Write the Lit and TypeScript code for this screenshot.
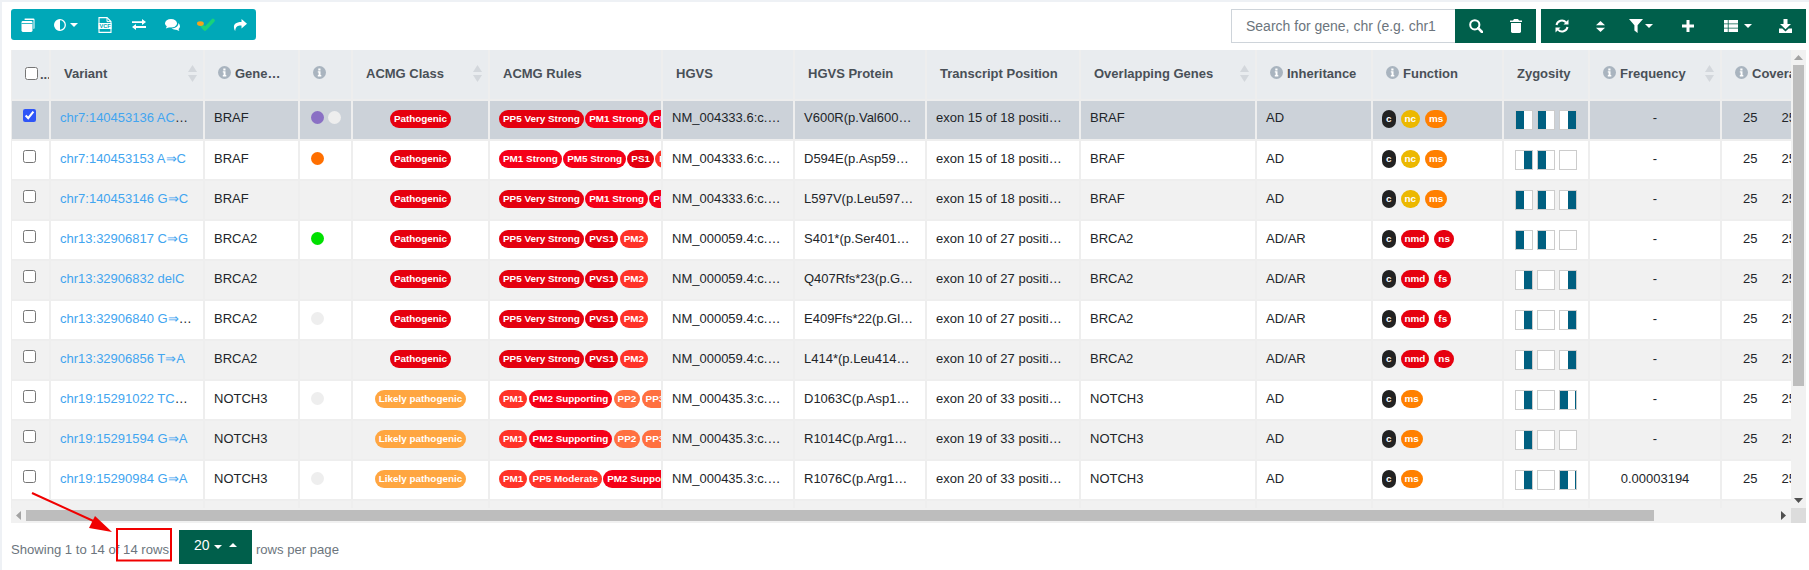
import { LitElement, html, css } from "lit";
import { customElement } from "lit/decorators.js";

const I = {
  copy: html`<svg width="14" height="14" viewBox="0 0 14 14" fill="#fff"><path d="M4 0.5h8.500a1 1 0 0 1 1 1V10a1 1 0 0 1-1 1V2H4a0.800 0.800 0 0 1 0-1.500z"/><rect x="0.500" y="3" width="11" height="11" rx="1.400"/><rect x="0.500" y="5" width="11" height="0.800" fill="#00a8b8"/></svg>`,
  adjust: html`<svg width="12" height="12" viewBox="0 0 12 12"><circle cx="6" cy="6" r="5.300" fill="none" stroke="#fff" stroke-width="1.300"/><path d="M6 0.500a5.500 5.500 0 0 0 0 11z" fill="#fff"/></svg>`,
  caret: html`<svg class="caret" width="8" height="4" viewBox="0 0 8 4" fill="#fff"><path d="M0 0h8L4 4z"/></svg>`,
  vcf: html`<svg width="14" height="16" viewBox="0 0 14 16"><path d="M1 .6h8l4 4V15.400H1z" fill="none" stroke="#fff" stroke-width="1.100"/><path d="M9 .6v4h4" fill="none" stroke="#fff"/><rect x="0.500" y="6" width="13" height="6" fill="#fff"/><text x="7" y="11" text-anchor="middle" font-family="Liberation Sans" font-weight="700" font-size="5.600" fill="#00a8b8">VCF</text></svg>`,
  exchange: html`<svg width="14" height="11" viewBox="0 0 14 11" fill="#fff"><path d="M0 2.200h10V0l4 3-4 3V4H0z"/><path d="M14 7H4V5L0 8l4 3V9h10z"/></svg>`,
  comments: html`<svg width="15" height="12" viewBox="0 0 15 12" fill="#fff"><ellipse cx="6" cy="4.300" rx="6" ry="4.300"/><path d="M2 7l-1.200 2.600L5 8z"/><path d="M13.400 4a4.600 4.600 0 0 1 1.600 3.200c0 1.200-.6 2.200-1.500 2.800l.9 2-3.200-1.300c-1.900.2-3.600-.3-4.600-1.400 3.400.1 7-1.700 6.800-5.300z"/></svg>`,
  check: html`<svg width="18" height="13" viewBox="0 0 18 13"><path d="M5.500 8.200L8 11l8-8.500" fill="none" stroke="#18d27a" stroke-width="3.600" stroke-linecap="round" stroke-linejoin="round"/><ellipse cx="3.400" cy="5.600" rx="3.400" ry="2.400" fill="#f2a31d"/></svg>`,
  share: html`<svg width="14" height="12" viewBox="0 0 14 12" fill="#fff"><path d="M8.500 0L14 4.700 8.500 9.400V6.600C5 6.500 2.600 7.300 2.200 12 .2 8.700-.5 3 8.500 3z"/></svg>`,
  search: html`<svg width="14" height="14" viewBox="0 0 14 14" fill="none" stroke="#fff"><circle cx="5.800" cy="5.800" r="4.600" stroke-width="2"/><path d="M9.200 9.200L13 13" stroke-width="2.600" stroke-linecap="round"/></svg>`,
  trash: html`<svg width="12" height="14" viewBox="0 0 12 14" fill="#fff"><path d="M4 0h4l1 1.500h3V3H0V1.500h3z"/><path d="M1 4h10v8.600A1.400 1.400 0 0 1 9.600 14H2.400A1.400 1.400 0 0 1 1 12.600z"/></svg>`,
  refresh: html`<svg width="14" height="14" viewBox="0 0 14 14" fill="none" stroke="#fff" stroke-width="2"><path d="M1.500 6A5.500 5.500 0 0 1 11 3.400"/><path d="M12.500 8A5.500 5.500 0 0 1 3 10.600"/><path d="M13.500 .5v5h-5z" fill="#fff" stroke="none"/><path d="M.5 13.500v-5h5z" fill="#fff" stroke="none"/></svg>`,
  sort: html`<svg width="9" height="11" viewBox="0 0 9 11" fill="#fff"><path d="M4.500 0L9 4.300H0z"/><path d="M4.500 11L9 6.700H0z"/></svg>`,
  filter: html`<svg width="14" height="14" viewBox="0 0 14 14" fill="#fff"><path d="M0 0h14L8.600 6.200V14L5.400 11.400V6.200z"/></svg>`,
  plus: html`<svg width="12" height="12" viewBox="0 0 12 12" fill="#fff"><path d="M4.500 0h3v4.500H12v3H7.500V12h-3V7.500H0v-3h4.500z"/></svg>`,
  table: html`<svg width="14" height="12" viewBox="0 0 14 12" fill="#fff"><path d="M0 0h3.800v3.400H0zM4.600 0H14v3.400H4.600zM0 4.300h3.800v3.400H0zM4.600 4.300H14v3.400H4.600zM0 8.600h3.800V12H0zM4.600 8.600H14V12H4.600z"/></svg>`,
  download: html`<svg width="13" height="14" viewBox="0 0 13 14" fill="#fff"><path d="M4.500 0h4v5H12L6.500 10.300 1 5h3.500z"/><path d="M0 9.500h3.300l3.200 3 3.200-3H13V14H0z"/></svg>`,
  info: html`<svg class="info" width="13" height="13" viewBox="0 0 13 13"><circle cx="6.500" cy="6.500" r="6.500" fill="#a9b4bf"/><path d="M5.300 2.500h2.200v1.900H5.300zM4.800 5.300h2.700v3.800h.8v1.300H4.800V9.100h.8V6.600h-.8z" fill="#fff"/></svg>`,
  sortH: html`<svg class="sorth" width="9" height="17" viewBox="0 0 9 17" fill="#d3d7dc"><path d="M4.500 0L9 7H0z"/><path d="M4.500 17L9 10H0z"/></svg>`,
  aUp: html`<svg width="9" height="5" viewBox="0 0 9 5" fill="#a3a3a3"><path d="M4.500 0L9 5H0z"/></svg>`,
  aDown: html`<svg width="9" height="5" viewBox="0 0 9 5" fill="#505050"><path d="M0 0h9L4.500 5z"/></svg>`,
  aLeft: html`<svg width="5" height="9" viewBox="0 0 5 9" fill="#a3a3a3"><path d="M5 0v9L0 4.500z"/></svg>`,
  aRight: html`<svg width="5" height="9" viewBox="0 0 5 9" fill="#505050"><path d="M0 0l5 4.500L0 9z"/></svg>`,
};

type H = { t: string; info?: boolean; sort?: boolean };
const heads: H[] = [
  { t: "Variant", sort: true },
  { t: "Gene…", info: true },
  { t: "", info: true },
  { t: "ACMG Class", sort: true },
  { t: "ACMG Rules" },
  { t: "HGVS" },
  { t: "HGVS Protein" },
  { t: "Transcript Position" },
  { t: "Overlapping Genes", sort: true },
  { t: "Inheritance", info: true },
  { t: "Function", info: true },
  { t: "Zygosity" },
  { t: "Frequency", info: true, sort: true },
  { t: "Coverage", info: true },
];

const rulesA = ["PP5 Very Strong", "PM1 Strong", "PM5 Strong", "PM2"];
const rulesB = ["PM1 Strong", "PM5 Strong", "PS1", "PM2"];
const rulesC = ["PP5 Very Strong", "PVS1", "PM2"];
const rulesD = ["PM1", "PM2 Supporting", "PP2", "PP3"];
const rulesE = ["PM1", "PP5 Moderate", "PM2 Supporting"];

const ruleClass: Record<string, string> = {
  "PP5 Very Strong": "vs",
  "PVS1": "vs",
  "PS1": "vs",
  "PM1 Strong": "st",
  "PM5 Strong": "st",
  "PM2 Supporting": "st",
  "PM2": "mo",
  "PM1": "mo",
  "PP5 Moderate": "mo",
  "PP2": "su",
  "PP3": "su",
};

const fnClass: Record<string, string> = { c: "fc", nc: "fnc", ms: "fms", nmd: "fr", ns: "fr", fs: "fr" };

type R = {
  v: string; g: string; dots: string[]; cls: string; rules: string[]; nm: string; p: string; e: string;
  inh: string; fn: string[]; z: string[]; f: string;
};

const P = "Pathogenic";
const L = "Likely pathogenic";
const rows: R[] = [
  { v: "chr7:140453136 AC⇒TT", g: "BRAF", dots: ["purple", "pale"], cls: P, rules: rulesA, nm: "NM_004333.6:c.1798_1799delinsAA", p: "V600R(p.Val600Arg)", e: "exon 15 of 18 position 1799", inh: "AD", fn: ["c", "nc", "ms"], z: ["l", "l", "r"], f: "-" },
  { v: "chr7:140453153 A⇒C", g: "BRAF", dots: ["orange"], cls: P, rules: rulesB, nm: "NM_004333.6:c.1782T>G", p: "D594E(p.Asp594Glu)", e: "exon 15 of 18 position 1782", inh: "AD", fn: ["c", "nc", "ms"], z: ["r", "l", "n"], f: "-" },
  { v: "chr7:140453146 G⇒C", g: "BRAF", dots: [], cls: P, rules: rulesA, nm: "NM_004333.6:c.1789C>G", p: "L597V(p.Leu597Val)", e: "exon 15 of 18 position 1789", inh: "AD", fn: ["c", "nc", "ms"], z: ["l", "l", "r"], f: "-" },
  { v: "chr13:32906817 C⇒G", g: "BRCA2", dots: ["green"], cls: P, rules: rulesC, nm: "NM_000059.4:c.1202C>G", p: "S401*(p.Ser401Ter)", e: "exon 10 of 27 position 1202", inh: "AD/AR", fn: ["c", "nmd", "ns"], z: ["l", "l", "n"], f: "-" },
  { v: "chr13:32906832 delC", g: "BRCA2", dots: [], cls: P, rules: rulesC, nm: "NM_000059.4:c.1218delC", p: "Q407Rfs*23(p.Gln407ArgfsTer23)", e: "exon 10 of 27 position 1218", inh: "AD/AR", fn: ["c", "nmd", "fs"], z: ["r", "n", "r"], f: "-" },
  { v: "chr13:32906840 G⇒GA", g: "BRCA2", dots: ["pale"], cls: P, rules: rulesC, nm: "NM_000059.4:c.1225dupA", p: "E409Ffs*22(p.Glu409PhefsTer22)", e: "exon 10 of 27 position 1225", inh: "AD/AR", fn: ["c", "nmd", "fs"], z: ["r", "n", "r"], f: "-" },
  { v: "chr13:32906856 T⇒A", g: "BRCA2", dots: [], cls: P, rules: rulesC, nm: "NM_000059.4:c.1241T>A", p: "L414*(p.Leu414Ter)", e: "exon 10 of 27 position 1241", inh: "AD/AR", fn: ["c", "nmd", "ns"], z: ["r", "n", "r"], f: "-" },
  { v: "chr19:15291022 TC⇒AA", g: "NOTCH3", dots: ["pale"], cls: L, rules: rulesD, nm: "NM_000435.3:c.3187_3188delinsTT", p: "D1063C(p.Asp1063Cys)", e: "exon 20 of 33 position 3187", inh: "AD", fn: ["c", "ms"], z: ["r", "n", "t"], f: "-" },
  { v: "chr19:15291594 G⇒A", g: "NOTCH3", dots: [], cls: L, rules: rulesD, nm: "NM_000435.3:c.3040C>T", p: "R1014C(p.Arg1014Cys)", e: "exon 19 of 33 position 3040", inh: "AD", fn: ["c", "ms"], z: ["r", "n", "n"], f: "-" },
  { v: "chr19:15290984 G⇒A", g: "NOTCH3", dots: ["pale"], cls: L, rules: rulesE, nm: "NM_000435.3:c.3226C>T", p: "R1076C(p.Arg1076Cys)", e: "exon 20 of 33 position 3226", inh: "AD", fn: ["c", "ms"], z: ["r", "n", "t"], f: "0.00003194" },
  { v: "", g: "", dots: [], cls: "", rules: [], nm: "", p: "", e: "", inh: "", fn: [], z: [], f: "" },
];

@customElement("app-root")
export class AppRoot extends LitElement {
  static styles = css`
    :host { display: block; font-family: "Liberation Sans", Arial, sans-serif; font-size: 13px; color: #212529; }
    * { box-sizing: border-box; }
    .page { position: relative; height: 570px; background: #fff; border-top: 2px solid #eef1f5; border-left: 2px solid #eef1f5; padding: 7px 3px 0 9px; overflow: hidden; }
    .bar { display: flex; align-items: flex-start; height: 34px; }
    .group { display: grid; place-items: center; color: #fff; }
    .group > span { display: flex; align-items: center; justify-content: center; gap: 4px; height: 100%; width: 100%; }
    .left { height: 31px; background: #00a8b8; border-radius: 3px; grid-template-columns: 33px 44px 34px 34px 33px 34px 33px; }
    .search { display: flex; margin-left: auto; height: 34px; }
    .search-box { width: 224px; height: 34px; border: 1px solid #ced4da; border-right: 0; padding: 0 14px; font-size: 14px; line-height: 32px; color: #6c757d; white-space: nowrap; overflow: hidden; }
    .g2 { height: 34px; background: #005f4b; grid-template-columns: 41px 40px; }
    .g3 { height: 34px; background: #005f4b; margin-left: 5px; grid-template-columns: 42px 34px 48px 45px 55px 41px; }
    .g3 > span { gap: 2px; }
    .g3 > span.tb { gap: 6px; }
    .frame { margin-top: 7px; width: 1795px; height: 473px; display: grid; grid-template-columns: 1780px 15px; grid-template-rows: 458px 15px; }
    .view { overflow: hidden; background: #fff; }
    .vbar { display: flex; flex-direction: column; background: #f1f1f1; }
    .hbar { display: flex; background: #f1f1f1; }
    .sbtn { flex: none; display: flex; align-items: center; justify-content: center; width: 15px; height: 15px; }
    .vthumb { flex: none; height: 321px; margin: 0 2px; background: #bdbdbd; }
    .hthumb { flex: none; width: 1628px; margin: 2px 0; background: #bdbdbd; }
    .fill { flex: 1; }
    .corner { background: #dcdcdc; }
    table { border-collapse: separate; border-spacing: 0; table-layout: fixed; width: 1913px; border-left: 1px solid #eeeeee; }
    th { height: 51px; background: #e9ecef; border-right: 2px solid #eeeeee; border-bottom: 2px solid #eeeeee; padding: 0 6px 0 13px; font-size: 13px; font-weight: 700; color: #495057; text-align: left; white-space: nowrap; overflow: hidden; vertical-align: top; }
    .th { display: flex; align-items: center; justify-content: space-between; height: 46px; }
    .th > span { display: flex; align-items: center; gap: 4px; }
    .info { flex: none; margin-top: -2px; }
    .sorth { flex: none; margin-top: 1px; }
    th.chk0 { padding-right: 0; }
    .chk0 .th { justify-content: flex-start; gap: 2px; }
    .chk0 input { margin-bottom: 5px; }
    .dots3 { font-weight: 700; color: #495057; line-height: 13px; padding-top: 3px; }
    input[type="checkbox"] { display: block; width: 13px; height: 13px; margin: 0; accent-color: #2f55f7; flex: none; }
    td { height: 40px; border-right: 2px solid #eeeeee; border-bottom: 2px solid #eeeeee; padding: 10px 11px 0 9px; line-height: 16px; white-space: nowrap; overflow: hidden; text-overflow: ellipsis; vertical-align: top; }
    tr.even td { background: #f1f1f1; }
    tr.sel td { background: #ccd2d9; padding-top: 9px; }
    td.chk { padding: 9px 0 0 11px; }
    tr.sel td.chk { padding-top: 8px; }
    a { color: #42a5f0; text-decoration: none; }
    td.clip { text-overflow: clip; padding-top: 9px; padding-right: 0; }
    td.center { text-align: center; padding-left: 0; padding-right: 0; }
    .pills { display: flex; gap: 1.300px; }
    .pills.fn { gap: 5px; }
    .pill { display: inline-block; flex: none; height: 18px; line-height: 18px; padding: 0 4px; border-radius: 9px; color: #fff; font-size: 9.900px; font-weight: 700; }
    .path { background: #e6000f; }
    .lik { background: #ffa640; }
    .vs { background: #e4000f; }
    .st { background: #f50018; }
    .mo { background: #ff3328; }
    .su { background: #ff7040; }
    .fc { background: #222222; }
    .fnc { background: #ecb800; }
    .fms { background: #ff8000; }
    .fr { background: #e6000f; }
    .dots { display: flex; gap: 4px; margin-top: 2px; padding-left: 2px; }
    tr.sel .dots { margin-top: 1px; }
    .dot { width: 13px; height: 13px; border-radius: 50%; }
    .purple { background: #8a70c4; }
    .pale { background: #eeeeee; }
    .orange { background: #ff6f00; }
    .green { background: #00e000; }
    .zyg { display: flex; gap: 4px; padding-left: 2px; }
    .box { width: 18px; height: 20px; border: 1px solid #cccccc; background: #fff; }
    .box.l { background: linear-gradient(90deg, #005f80 50%, #fff 50%); }
    .box.r { background: linear-gradient(90deg, #fff 50%, #005f80 50%); }
    .box.t { background: linear-gradient(90deg, #005f80 8px, #fff 8px, #fff 15px, #005f80 15px); }
    .cov { display: flex; gap: 24px; padding-left: 12px; }
    .foot { display: flex; align-items: center; margin-top: 7px; height: 34px; font-size: 13.100px; color: #6c757d; }
    .foot > span { padding-top: 5px; }
    .page-btn { display: flex; align-items: center; width: 73px; height: 34px; margin: 0 4px 0 10px; padding: 0 0 4px 15px; background: #005f4b; color: #fff; font-size: 14px; }
    .page-btn .dn { margin: 3px 0 0 4px; }
    .page-btn .up { margin: -1px 0 0 7px; transform: rotate(180deg); }
    .anno { position: absolute; left: -2px; top: -2px; pointer-events: none; }
  `;

  private head() {
    return html`<tr>
      <th class="chk0"><div class="th"><input type="checkbox" /><span class="dots3">...</span></div></th>
      ${heads.map(
        (h) => html`<th><div class="th"><span>${h.info ? I.info : ""}${h.t}</span>${h.sort ? I.sortH : ""}</div></th>`
      )}
    </tr>`;
  }

  private row(r: R, i: number) {
    const cl = i === 0 ? "sel" : i % 2 === 0 ? "even" : "";
    return html`<tr class=${cl}>
      <td class="chk"><input type="checkbox" .checked=${i === 0} /></td>
      <td><a>${r.v}</a></td>
      <td>${r.g}</td>
      <td class="clip"><div class="dots">${r.dots.map((d) => html`<div class="dot ${d}"></div>`)}</div></td>
      <td class="clip center"><span class="pill ${r.cls === P ? "path" : "lik"}">${r.cls}</span></td>
      <td class="clip"><div class="pills">${r.rules.map((x) => html`<span class="pill ${ruleClass[x]}">${x}</span>`)}</div></td>
      <td>${r.nm}</td>
      <td>${r.p}</td>
      <td>${r.e}</td>
      <td>${r.g}</td>
      <td>${r.inh}</td>
      <td class="clip"><div class="pills fn">${r.fn.map((x) => html`<span class="pill ${fnClass[x]}">${x}</span>`)}</div></td>
      <td class="clip"><div class="zyg">${r.z.map((z) => html`<div class="box ${z}"></div>`)}</div></td>
      <td class="center">${r.f}</td>
      <td><div class="cov"><span>25</span><span>25</span></div></td>
    </tr>`;
  }

  render() {
    const widths = [39, 154, 95, 53, 137, 173, 132, 132, 154, 176, 116, 131, 86, 132, 202];
    return html`<div class="page">
      <div class="bar">
        <div class="group left">
          <span>${I.copy}</span>
          <span>${I.adjust}${I.caret}</span>
          <span>${I.vcf}</span>
          <span>${I.exchange}</span>
          <span>${I.comments}</span>
          <span>${I.check}</span>
          <span>${I.share}</span>
        </div>
        <div class="search">
          <div class="search-box">Search for gene, chr (e.g. chr1</div>
          <div class="group g2"><span>${I.search}</span><span>${I.trash}</span></div>
        </div>
        <div class="group g3">
          <span>${I.refresh}</span>
          <span>${I.sort}</span>
          <span>${I.filter}${I.caret}</span>
          <span>${I.plus}</span>
          <span class="tb">${I.table}${I.caret}</span>
          <span>${I.download}</span>
        </div>
      </div>
      <div class="frame">
        <div class="view">
          <table>
            <colgroup>${widths.map((w) => html`<col style="width:${w}px" />`)}</colgroup>
            <thead>${this.head()}</thead>
            <tbody>${rows.map((r, i) => this.row(r, i))}</tbody>
          </table>
        </div>
        <div class="vbar">
          <div class="sbtn">${I.aUp}</div>
          <div class="vthumb"></div>
          <div class="fill"></div>
          <div class="sbtn">${I.aDown}</div>
        </div>
        <div class="hbar">
          <div class="sbtn">${I.aLeft}</div>
          <div class="hthumb"></div>
          <div class="fill"></div>
          <div class="sbtn">${I.aRight}</div>
        </div>
        <div class="corner"></div>
      </div>
      <div class="foot">
        <span>Showing 1 to 14 of 14 rows</span>
        <div class="page-btn">20<svg class="dn" width="8" height="4" viewBox="0 0 8 4" fill="#fff"><path d="M0 0h8L4 4z"/></svg><svg class="up" width="8" height="4" viewBox="0 0 8 4" fill="#fff"><path d="M0 0h8L4 4z"/></svg></div>
        <span>rows per page</span>
      </div>
      <svg class="anno" width="200" height="570" viewBox="0 0 200 570">
        <path d="M32 493L100 524" stroke="#f00000" stroke-width="2" fill="none" />
        <path d="M112 532L95 516L89 528z" fill="#f00000" />
        <rect x="117" y="529" width="54" height="31.500" fill="none" stroke="#f00000" stroke-width="2" />
      </svg>
    </div>`;
  }
}
